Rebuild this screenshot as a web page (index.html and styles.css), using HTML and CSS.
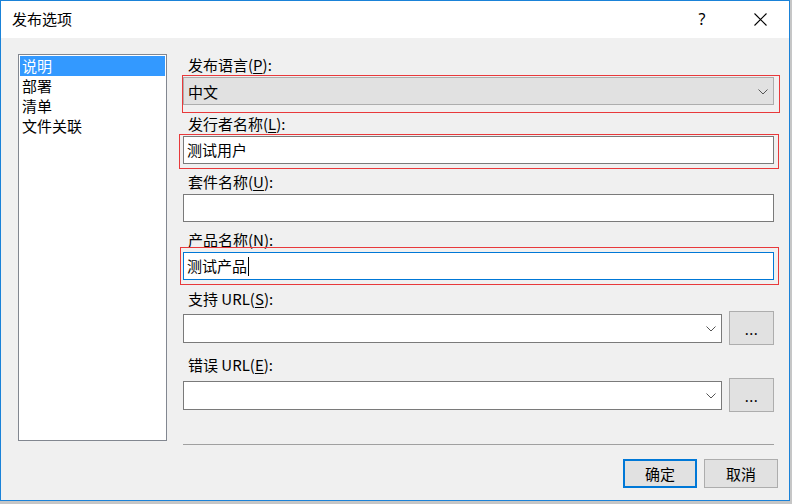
FILE: index.html
```html
<!DOCTYPE html>
<html lang="zh-CN">
<head>
<meta charset="utf-8">
<title>发布选项</title>
<link rel="stylesheet" href="styles.css">
</head>
<body>
<div class="window">
  <div class="titlebar">
    <span class="title">发布选项</span>
    <span class="cap-btn help">?</span>
    <span class="cap-btn close">
      <svg width="13" height="13" viewBox="0 0 13 13"><path d="M0.5 0.5 L12.5 12.5 M12.5 0.5 L0.5 12.5" stroke="#000" stroke-width="1.1" fill="none"/></svg>
    </span>
  </div>
  <div class="content">
    <div class="main">
      <ul class="nav">
        <li class="nav-item selected">说明</li>
        <li class="nav-item">部署</li>
        <li class="nav-item">清单</li>
        <li class="nav-item">文件关联</li>
      </ul>
      <div class="form">
        <div class="label l1">发布语言(<u>P</u>):</div>
        <div class="combo combo-gray annot a1">
          <span class="value">中文</span>
          <svg class="chev" width="10" height="6" viewBox="0 0 10 6"><polyline points="0.5,0.5 5,5 9.5,0.5" stroke="#555" stroke-width="1" fill="none"/></svg>
        </div>

        <div class="label l2">发行者名称(<u>L</u>):</div>
        <div class="textbox annot a2"><span class="value">测试用户</span></div>

        <div class="label l3">套件名称(<u>U</u>):</div>
        <div class="textbox"></div>

        <div class="label l4">产品名称(N):</div>
        <div class="textbox focused annot a3"><span class="value">测试产品</span><span class="caret"></span></div>

        <div class="label l5">支持 URL(<u>S</u>):</div>
        <div class="url-row r1">
          <div class="combo combo-white">
            <svg class="chev" width="10" height="6" viewBox="0 0 10 6"><polyline points="0.5,0.5 5,5 9.5,0.5" stroke="#555" stroke-width="1" fill="none"/></svg>
          </div>
          <div class="browse">...</div>
        </div>

        <div class="label l6">错误 URL(<u>E</u>):</div>
        <div class="url-row r2">
          <div class="combo combo-white">
            <svg class="chev" width="10" height="6" viewBox="0 0 10 6"><polyline points="0.5,0.5 5,5 9.5,0.5" stroke="#555" stroke-width="1" fill="none"/></svg>
          </div>
          <div class="browse">...</div>
        </div>

        <div class="separator"></div>
        <div class="actions">
          <div class="btn default">确定</div>
          <div class="btn">取消</div>
        </div>
      </div>
    </div>
  </div>
</div>
</body>
</html>
```

FILE: styles.css
```css
* { box-sizing: border-box; }
html, body {
  margin: 0;
  padding: 0;
  background: #c6c6c6;
}
body {
  width: 792px;
  height: 504px;
  overflow: hidden;
  font-family: "Noto Sans CJK SC", "Noto Sans", sans-serif;
  font-size: 15px;
  color: #000;
}
.window {
  position: relative;
  width: 790px;
  height: 501px;
  border: 1px solid #1a82d8;
  background: #f0f0f0;
  display: flex;
  flex-direction: column;
}
.titlebar {
  height: 37px;
  background: #fff;
  display: flex;
  align-items: center;
  padding-left: 11px;
  flex: none;
}
.title {
  line-height: 20px;
  margin-top: -1px;
  flex: 1;
}
.cap-btn {
  width: 58px;
  height: 37px;
  display: flex;
  align-items: center;
  justify-content: center;
}
.help {
  font-family: "Noto Sans", sans-serif;
  font-size: 16px;
  line-height: 20px;
  padding-bottom: 2px;
}
.close svg { display: block; margin-top: -1px; }

.content {
  flex: 1;
  padding: 16px 0 0 17px;
}
.main {
  display: flex;
  gap: 16px;
  align-items: flex-start;
}
.nav {
  list-style: none;
  margin: 0;
  padding: 1px;
  width: 149px;
  height: 387px;
  background: #fff;
  border: 1px solid #828790;
  flex: none;
}
.nav-item {
  height: 20px;
  line-height: 20px;
  padding-left: 2px;
  white-space: nowrap;
}
.nav-item.selected {
  background: #3399ff;
  color: #fff;
}

.form {
  width: 591px;
  margin-top: 1px;
  display: flex;
  flex-direction: column;
}
.label {
  height: 20px;
  line-height: 20px;
  padding-left: 5px;
  white-space: nowrap;
}
.label u { text-underline-offset: 2px; }
.l2 { margin-top: 9px; }
.l3 { margin-top: 8px; }
.l4 { margin-top: 8px; }
.l5 { margin-top: 9px; }
.l6 { margin-top: 10px; }

.combo, .textbox {
  position: relative;
  height: 28px;
  margin-top: 2px;
  display: flex;
  align-items: center;
  padding-left: 3px;
  line-height: 20px;
}
.textbox {
  background: #fff;
  border: 1px solid #7a7a7a;
}
.textbox.focused { border-color: #0078d7; }
.combo-gray {
  background: #e1e1e1;
  border: 1px solid #adadad;
  padding-left: 4px;
}
.combo-gray .value { margin-top: 2px; }
.combo-white {
  background: #fff;
  border: 1px solid #7a7a7a;
  margin-top: 0;
  height: 29px;
  flex: 1;
}
.chev {
  position: absolute;
  right: 5px;
  top: 11px;
}
.combo-white .chev { top: 11px; }
.value { white-space: nowrap; }
.caret {
  display: inline-block;
  width: 1px;
  height: 19px;
  background: #000;
  margin-left: 1px;
}

.annot::after {
  content: "";
  position: absolute;
  border: 1px solid #e8393b;
  pointer-events: none;
}
.a1::after { left: -2px; top: -3px; right: -7px; bottom: -9px; }
.a2::after { left: -5px; top: -3px; right: -6px; bottom: -6px; }
.a3::after { left: -4px; top: -6px; right: -6px; bottom: -6px; }

.url-row {
  display: flex;
  align-items: center;
  gap: 7px;
  height: 34px;
}
.r1 { margin-top: 2px; }
.r2 { margin-top: 3px; }
.browse {
  width: 45px;
  height: 34px;
  background: #e1e1e1;
  border: 1px solid #adadad;
  display: flex;
  align-items: center;
  justify-content: center;
  font-family: "Noto Sans", sans-serif;
  font-size: 15px;
  padding-top: 2px;
  letter-spacing: 0.5px;
}

.separator {
  height: 1px;
  background: #a0a0a0;
  margin-top: 32px;
}
.actions {
  display: flex;
  justify-content: flex-end;
  gap: 7px;
  margin-top: 14px;
  margin-right: -4px;
}
.btn {
  width: 74px;
  height: 29px;
  background: #e1e1e1;
  border: 1px solid #adadad;
  display: flex;
  align-items: center;
  justify-content: center;
  line-height: 20px;
}
.btn.default { border: 2px solid #0078d7; }
```
